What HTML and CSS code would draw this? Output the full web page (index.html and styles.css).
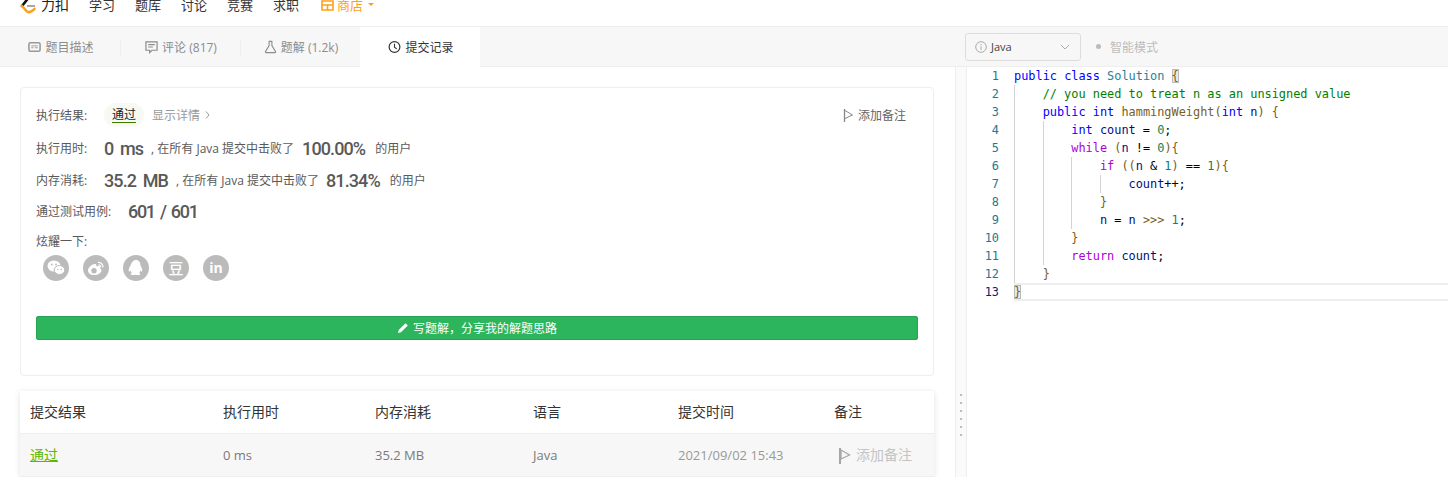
FILE: index.html
```html
<!DOCTYPE html>
<html lang="zh-CN">
<head>
<meta charset="utf-8">
<title>提交记录</title>
<link rel="stylesheet" href="styles.css">
</head>
<body>
<div class="app">
  <nav class="nav">
    <svg class="logo" width="16" height="18" viewBox="0 0 16 18"><path d="M8 2.500 L2 10" fill="none" stroke="#111" stroke-width="2.600" stroke-linecap="round"/><path d="M7 10 H15" stroke="#a8a8a8" stroke-width="2"/><path d="M2 10 L7 15.500 Q9.500 17 12 15 L14.500 13" fill="none" stroke="#ffa116" stroke-width="2.600" stroke-linecap="round"/></svg>
    <span class="brand">力扣</span>
    <a class="nav-link">学习</a>
    <a class="nav-link">题库</a>
    <a class="nav-link">讨论</a>
    <a class="nav-link">竞赛</a>
    <a class="nav-link">求职</a>
    <a class="nav-store">
      <svg width="13" height="13" viewBox="0 0 13 13"><path d="M1 3h11v9H1zM1 7h11M6.500 7v5M3 1h7" fill="none" stroke="#ffa116" stroke-width="1.600"/></svg>
      <span>商店</span><i class="caret"></i>
    </a>
  </nav>
  <div class="toolbar">
    <div class="tabs">
      <div class="tab">
        <svg width="13" height="14" viewBox="0 0 14 14"><rect x="1" y="2.500" width="12" height="9" rx="1.500" fill="none" stroke="#999" stroke-width="1.700"/><path d="M3.500 7.800h2.500M7.500 7.800h3M3.500 5.800h7" stroke="#999" stroke-width="1"/></svg>
        <span>题目描述</span>
      </div>
      <div class="tab">
        <svg width="13" height="14" viewBox="0 0 14 14"><path d="M1 1.500h12v9H7.500L5 13v-2.500H1z" fill="none" stroke="#8c8c8c" stroke-width="1.300"/><path d="M3.500 4.500h7M3.500 7h5" stroke="#8c8c8c" stroke-width="1.200"/></svg>
        <span>评论 (817)</span>
      </div>
      <div class="tab">
        <svg width="13" height="14" viewBox="0 0 14 14"><path d="M5 1h4M5.500 1v4.500L1.500 12a.8.8 0 0 0 .7 1h9.600a.8.8 0 0 0 .7-1L8.500 5.500V1" fill="none" stroke="#8c8c8c" stroke-width="1.200"/></svg>
        <span>题解 (1.2k)</span>
      </div>
      <div class="tab tab-active">
        <svg width="13" height="14" viewBox="0 0 14 14"><circle cx="7" cy="7" r="5.800" fill="none" stroke="#333" stroke-width="1.300"/><path d="M7 3.500V7.300L9.500 9" fill="none" stroke="#333" stroke-width="1.200"/></svg>
        <span>提交记录</span>
      </div>
    </div>
    <div class="editor-tools">
      <div class="select">
        <svg width="12" height="12" viewBox="0 0 12 12"><circle cx="6" cy="6" r="5.300" fill="none" stroke="#aaa"/><path d="M6 3v1.200M6 5.300V9" stroke="#aaa"/></svg>
        <span class="select-text">Java</span>
        <svg class="chev" width="10" height="6" viewBox="0 0 10 6"><path d="M1 1l4 4 4-4" fill="none" stroke="#aaa"/></svg>
      </div>
      <div class="mode"><i class="mode-dot"></i><span>智能模式</span></div>
    </div>
  </div>
  <div class="main">
    <section class="left">
      <div class="card">
        <div class="row row-result">
          <span class="label">执行结果:</span>
          <span class="pill"><span class="pill-text">通过</span></span>
          <span class="detail">显示详情</span>
          <svg class="detail-chev" width="5" height="8" viewBox="0 0 5 8"><path d="M1 .5L4 4 1 7.500" fill="none" stroke="#999"/></svg>
          <span class="note">
            <svg width="11" height="13" viewBox="0 0 11 13"><path d="M1.500 0v13" stroke="#888" stroke-width="1.300"/><path d="M2 1.500L9.500 6 2 9.500" fill="none" stroke="#888"/></svg>
            <span>添加备注</span>
          </span>
        </div>
        <div class="row row-time">
          <span class="label">执行用时:</span>
          <b class="big">0 ms</b>
          <span class="small gap-a">, 在所有 Java 提交中击败了</span>
          <b class="big gap-b">100.00%</b>
          <span class="small gap-c">的用户</span>
        </div>
        <div class="row row-mem">
          <span class="label">内存消耗:</span>
          <b class="big">35.2 MB</b>
          <span class="small gap-a">, 在所有 Java 提交中击败了</span>
          <b class="big gap-b gap-b2">81.34%</b>
          <span class="small gap-c">的用户</span>
        </div>
        <div class="row row-cases">
          <span class="label label-wide">通过测试用例:</span>
          <b class="big big-tight">601 / 601</b>
        </div>
        <div class="share-title">炫耀一下:</div>
        <div class="share">
          <span class="social"><svg width="18" height="16" viewBox="0 0 18 16"><ellipse cx="7" cy="6" rx="6.500" ry="5.500" fill="#fff"/><circle cx="4.800" cy="4.500" r=".9" fill="#bbb"/><circle cx="9" cy="4.500" r=".9" fill="#bbb"/><ellipse cx="12.500" cy="10" rx="5.300" ry="4.500" fill="#fff" stroke="#bbb"/><circle cx="10.800" cy="9.500" r=".7" fill="#bbb"/><circle cx="14.200" cy="9.500" r=".7" fill="#bbb"/></svg></span>
          <span class="social"><svg width="18" height="16" viewBox="0 0 18 16"><path d="M1 10.500C1 7 6 3.500 8.500 4c1 .3 1 1.500.7 2.500 2-.7 4-.5 4 1 0 .5-.2.900-.2.900 1 .3 1.500 1 1.500 2 0 2-3 4.600-7.500 4.600C3.500 15 1 13 1 10.500z" fill="#fff"/><circle cx="7" cy="10.800" r="2.700" fill="#bbb"/><path d="M11 2.500a4.500 4.500 0 0 1 5 5M11.500 5a2 2 0 0 1 2.300 2.300" fill="none" stroke="#fff" stroke-width="1.200"/></svg></span>
          <span class="social"><svg width="16" height="18" viewBox="0 0 16 18"><path d="M8 1c3 0 4.500 2.500 4.500 5.500 1 1.500 2.500 5 1.500 6-.6.400-1.300-.8-1.500-1-.2 1-.8 2-1.500 2.500 1 .4 1.500 1 1 1.700-.5.500-3.500.5-4.500 0-1 .5-4 .5-4.500 0-.5-.7 0-1.300 1-1.700-.7-.5-1.300-1.500-1.500-2.500-.2.200-.9 1.400-1.500 1-1-1 .5-4.500 1.500-6C3.500 3.500 5 1 8 1z" fill="#fff"/></svg></span>
          <span class="social social-text">豆</span>
          <span class="social social-text social-in">in</span>
        </div>
        <button class="solve">
          <svg width="12" height="12" viewBox="0 0 12 12"><path d="M1 11l.7-3L8.500 1.200l2.300 2.300L4 10.300z" fill="#fff"/></svg>
          <span>写题解，分享我的解题思路</span>
        </button>
      </div>
      <table class="records">
        <colgroup><col class="c1"><col class="c2"><col class="c3"><col class="c4"><col class="c5"><col class="c6"></colgroup>
        <thead>
          <tr><th>提交结果</th><th>执行用时</th><th>内存消耗</th><th>语言</th><th>提交时间</th><th>备注</th></tr>
        </thead>
        <tbody>
          <tr>
            <td><a class="ok">通过</a></td>
            <td>0 ms</td>
            <td>35.2 MB</td>
            <td>Java</td>
            <td class="muted">2021/09/02 15:43</td>
            <td class="add-note">
              <svg width="13" height="16" viewBox="0 0 13 16"><path d="M2 0v16" stroke="#999" stroke-width="1.800"/><path d="M3 2l8.500 5L3 11z" fill="none" stroke="#aaa" stroke-width="1.300"/></svg><span>添加备注</span>
            </td>
          </tr>
        </tbody>
      </table>
    </section>
    <div class="splitter"><i></i><i></i><i></i><i></i><i></i><i></i></div>
    <section class="editor">
      <div class="gutter">
        <div>1</div><div>2</div><div>3</div><div>4</div><div>5</div><div>6</div><div>7</div><div>8</div><div>9</div><div>10</div><div>11</div><div>12</div><div class="cur">13</div>
      </div>
      <div class="code">
        <div class="ln"><span class="kw">public</span> <span class="kw">class</span> <span class="ty">Solution</span> <span class="match">{</span></div>
        <div class="ln"><i class="g"></i><span class="cm">// you need to treat n as an unsigned value</span></div>
        <div class="ln"><i class="g"></i><span class="kw">public</span> <span class="kw">int</span> <span class="fn">hammingWeight(</span><span class="kw">int</span> <span class="var">n</span><span class="fn">) {</span></div>
        <div class="ln"><i class="g"></i><i class="g"></i><span class="kw">int</span> <span class="var">count</span> = <span class="num">0</span>;</div>
        <div class="ln"><i class="g"></i><i class="g"></i><span class="ctl">while</span> <span class="fn">(</span><span class="var">n</span> != <span class="num">0</span><span class="fn">){</span></div>
        <div class="ln"><i class="g"></i><i class="g"></i><i class="g"></i><span class="ctl">if</span> <span class="fn">((</span><span class="var">n</span> &amp; <span class="num">1</span><span class="fn">)</span> == <span class="num">1</span><span class="fn">){</span></div>
        <div class="ln"><i class="g"></i><i class="g"></i><i class="g"></i><i class="g"></i><span class="var">count</span>++;</div>
        <div class="ln"><i class="g"></i><i class="g"></i><i class="g"></i><span class="fn">}</span></div>
        <div class="ln"><i class="g"></i><i class="g"></i><i class="g"></i><span class="var">n</span> = <span class="var">n</span> <span class="fn">&gt;&gt;&gt;</span> <span class="num">1</span>;</div>
        <div class="ln"><i class="g"></i><i class="g"></i><span class="fn">}</span></div>
        <div class="ln"><i class="g"></i><i class="g"></i><span class="ctl">return</span> <span class="var">count</span>;</div>
        <div class="ln"><i class="g"></i><span class="fn">}</span></div>
        <div class="ln ln-cur"><span class="match">}</span></div>
      </div>
    </section>
  </div>
</div>
</body>
</html>
```
FILE: styles.css
```css
* { box-sizing: border-box; }
html, body { margin: 0; height: 100%; overflow: hidden; background: #fff; }
body { font-family: "Open Sans", "Noto Sans CJK SC", sans-serif; font-size: 12px; color: #333; }
.app { height: 100vh; display: flex; flex-direction: column; overflow: hidden; }

.nav { height: 44px; margin-top: -18px; flex: none; display: flex; align-items: center; padding-left: 20px; background: #fff; font-size: 13px; color: #333; }
.logo { margin-right: 5px; margin-top: 2px; }
.brand { font-size: 14px; width: 28px; margin-right: 20px; color: #222; }
.nav-link { margin-right: 20px; }
.nav-store { display: flex; align-items: center; gap: 3px; color: #ffa116; margin-left: 2px; }
.caret { width: 0; height: 0; margin-left: 2px; border: 3px solid transparent; border-top-color: #ffa116; border-bottom: 0; }

.toolbar { height: 41px; flex: none; display: flex; background: #f7f7f7; border-top: 1px solid #eee; border-bottom: 1px solid #eee; }
.tabs { width: 955px; display: flex; align-items: stretch; }
.tab { width: 120px; display: flex; align-items: center; justify-content: center; gap: 4px; padding-left: 2px; color: #8c8c8c; position: relative; }
.tab + .tab::before { content: ""; position: absolute; left: 0; top: 12px; height: 16px; border-left: 1px solid #eee; }
.tab-active { background: #fff; color: #333; margin-bottom: -1px; }
.tab-active::before { display: none; }
.editor-tools { display: flex; align-items: center; padding-left: 10px; }
.select { width: 116px; height: 28px; display: flex; align-items: center; padding: 0 10px 0 9px; border: 1px solid #ddd; border-radius: 3px; background: #f7f7f7; font-size: 11px; color: #444; }
.select-text { margin-left: 4px; flex: 1; }
.mode { display: flex; align-items: center; margin-left: 15px; color: #bdbdbd; }
.mode-dot { width: 5px; height: 5px; border-radius: 50%; background: #bbb; margin-right: 9px; }

.main { flex: 1; min-height: 0; display: flex; }
.left { width: 955px; flex: none; padding: 20px 20px 0; overflow: hidden; }
.card { width: 914px; height: 289px; border: 1px solid #eee; border-radius: 4px; padding: 15px 15px 0; background: #fff; }
.row { display: flex; align-items: center; }
.row-result { height: 24px; }
.row-time { height: 24px; margin-top: 9px; }
.row-mem { height: 24px; margin-top: 8px; }
.row-cases { height: 24px; margin-top: 7px; }
.label { width: 68px; flex: none; color: #595959; }
.label-wide { width: 92px; }
.pill { height: 24px; width: 40px; display: flex; align-items: center; justify-content: center; border-radius: 12px; background: #f7f9f3; }
.pill-text { color: #222; border-bottom: 1px solid #3f7d00; line-height: 15px; }
.detail { margin-left: 8px; color: #999; }
.detail-chev { margin-left: 5px; }
.note { margin-left: auto; margin-right: 12px; display: flex; align-items: center; gap: 4px; color: #666; }
.big { font-family: Roboto, sans-serif; font-weight: 500; font-size: 18px; color: #595959; letter-spacing: -.9px; word-spacing: 3px; }
.big-tight { word-spacing: 2px; letter-spacing: -1.3px; }
.small { color: #595959; white-space: nowrap; }
.gap-a { margin-left: 8px; }
.gap-b { margin-left: 8px; }
.gap-b2 { margin-left: 7px; }
.gap-c { margin-left: 10px; }
.share-title { margin-top: 11px; line-height: 16px; color: #595959; }
.share { display: flex; gap: 14px; margin: 5px 0 0 7px; }
.social { width: 26px; height: 26px; border-radius: 50%; background: #bbb; display: flex; align-items: center; justify-content: center; color: #fff; }
.social-text { font-size: 15px; font-weight: 500; line-height: 1; }
.social-in { font-weight: 700; font-size: 14px; }
.solve { margin-top: 35px; width: 882px; height: 24px; display: flex; align-items: center; justify-content: center; gap: 4px; padding: 0; border: 1px solid #28a355; border-radius: 2px; background: #2db55d; color: #fff; font: inherit; }

.records { width: 914px; margin-top: 15px; border-collapse: collapse; table-layout: fixed; background: #fff; box-shadow: 0 1px 6px rgba(0,0,0,.12); font-size: 13px; }
.c1 { width: 193px; } .c2 { width: 152px; } .c3 { width: 158px; } .c4 { width: 145px; } .c5 { width: 156px; } .c6 { width: 110px; }
.records th { height: 42px; padding: 0 10px 2px; font-size: 14px; font-weight: 400; text-align: left; color: #333; border-bottom: 1px solid #eee; }
.records td { height: 43px; padding: 0 10px; color: #7a7a7a; background: #f7f7f7; border-bottom: 1px solid #eee; white-space: nowrap; }
.records td.muted { color: #999; }
.ok { color: #5cb800; text-decoration: underline; text-underline-offset: 1px; font-size: 14px; vertical-align: 1px; }
.records td.add-note { color: #c4c4c4; font-size: 14px; }
.add-note span { vertical-align: 1px; }
.add-note svg { vertical-align: -3px; margin: 0 5px 0 4px; }

.splitter { width: 12px; flex: none; display: flex; flex-direction: column; align-items: center; justify-content: flex-start; gap: 6px; padding: 327px 1px 0 0; background: #fafafa; border-left: 1px solid #eee; border-right: 1px solid #eee; }
.splitter i { width: 2px; height: 2px; flex: none; background: #bbb; }

.editor { flex: 1; min-width: 0; display: flex; font-family: "DejaVu Sans Mono", monospace; font-size: 11.9px; line-height: 18px; background: #fff; }
.gutter { width: 32px; flex: none; text-align: right; color: #237893; }
.gutter .cur { color: #0b216f; }
.code { flex: 1; margin-left: 15px; color: #000; }
.ln { height: 18px; white-space: pre; }
.ln-cur { box-shadow: inset 0 2px 0 #eee, inset 0 -2px 0 #eee; }
.g { display: inline-block; width: 4ch; height: 18px; vertical-align: top; box-shadow: inset 1px 0 0 #d3d3d3; }
.kw { color: #00f; }
.ty { color: #267f99; }
.cm { color: #008000; }
.fn { color: #795e26; }
.var { color: #001080; }
.num { color: #098658; }
.ctl { color: #af00db; }
.match { background: #e9e9e9; box-shadow: inset 0 0 0 1px #b9b9b9; color: #795e26; }
```
